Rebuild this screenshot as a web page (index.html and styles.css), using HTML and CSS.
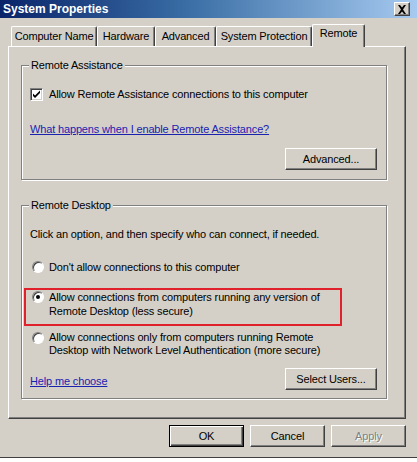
FILE: index.html
```html
<!DOCTYPE html>
<html lang="en">
<head>
  <meta charset="UTF-8">
  <title>System Properties</title>
  <link rel="stylesheet" href="styles.css">
</head>
<body>

  <div class="window">
    <!-- Title bar -->
    <div class="titlebar">
      <span class="title">System Properties</span>
      <span class="close">
        <svg width="10" height="9" viewBox="0 0 10 9"><path d="M1 0h2l2 2.5L7 0h2L6 4.5 9 9H7L5 6.5 3 9H1l3-4.5z" fill="#000"/></svg>
      </span>
    </div>

    <!-- Tabs -->
    <div class="tabs">
      <div class="tab tab-cn">Computer Name</div>
      <div class="tab tab-hw">Hardware</div>
      <div class="tab tab-adv">Advanced</div>
      <div class="tab tab-sp">System Protection</div>
      <div class="tab tab-rm active">Remote</div>
    </div>

    <div class="panel">
      <fieldset class="group group-ra">
        <legend>Remote Assistance</legend>
        <div class="check-row">
          <span class="checkbox">
            <svg width="9" height="9" viewBox="0 0 9 9"><path d="M1 3.5l2 2L8 0.5v2.5L3 8 1 6z" fill="#000"/></svg>
          </span>
          <span>Allow Remote Assistance connections to this computer</span>
        </div>
        <a class="link link-ra" href="#">What happens when I enable Remote Assistance?</a>
        <div class="btn-row">
          <button class="btn">Advanced...</button>
        </div>
      </fieldset>

      <fieldset class="group group-rd">
        <legend>Remote Desktop</legend>
        <p class="hint">Click an option, and then specify who can connect, if needed.</p>

        <div class="radio-row radio-1">
          <span class="radio"></span>
          <span>Don't allow connections to this computer</span>
        </div>

        <div class="highlight">
          <div class="radio-row">
            <span class="radio checked"></span>
            <span>Allow connections from computers running any version of<br>Remote Desktop (less secure)</span>
          </div>
        </div>

        <div class="radio-row radio-3">
          <span class="radio"></span>
          <span>Allow connections only from computers running Remote<br>Desktop with Network Level Authentication (more secure)</span>
        </div>

        <div class="bottom-row">
          <a class="link" href="#">Help me choose</a>
          <button class="btn">Select Users...</button>
        </div>
      </fieldset>
    </div>

    <!-- Dialog buttons -->
    <div class="dialog-buttons">
      <button class="btn btn-default">OK</button>
      <button class="btn">Cancel</button>
      <button class="btn" disabled>Apply</button>
    </div>
  </div>

</body>
</html>
```

FILE: styles.css
```css
* {
  box-sizing: border-box;
  margin: 0;
  padding: 0;
}
body {
  background: #fff;
  font-family: "Liberation Sans", Arial, sans-serif;
  font-size: 11px;
  letter-spacing: -0.15px;
  line-height: 14px;
  color: #000;
  width: 417px;
  height: 462px;
  overflow: hidden;
}
.window {
  width: 417px;
  height: 458px;
  background: #d4d0c8;
  border-bottom: 1px solid #404040;
  display: flex;
  flex-direction: column;
}

/* Title bar */
.titlebar {
  height: 18px;
  background: linear-gradient(90deg, #0a246a 0%, #3a6ea5 45%, #a6caf0 100%);
  display: flex;
  align-items: center;
  justify-content: space-between;
  padding: 0 7px 0 3px;
}
.title {
  color: #fff;
  font-weight: bold;
  font-size: 12px;
  letter-spacing: 0;
}
.close {
  width: 16px;
  height: 14px;
  background: #d4d0c8;
  border: 1px solid;
  border-color: #fff #404040 #404040 #fff;
  box-shadow: inset -1px -1px 0 #808080;
  display: flex;
  align-items: center;
  justify-content: center;
}

/* Tabs */
.tabs {
  display: flex;
  align-items: flex-end;
  height: 22px;
  margin: 6px 0 0 11px;
}
.tab {
  height: 20px;
  border: 1px solid #fff;
  border-bottom: none;
  border-right-color: #404040;
  border-radius: 2px 2px 0 0;
  box-shadow: inset -1px 0 0 #808080;
  text-align: center;
  line-height: 18px;
  white-space: nowrap;
}
.tab-cn { width: 86px; }
.tab-hw { width: 58px; }
.tab-adv { width: 61px; }
.tab-sp { width: 96px; }
.tab-rm { width: 53px; }
.tab.active {
  height: 23px;
  margin-bottom: -1px;
  position: relative;
  z-index: 1;
  background: #d4d0c8;
  line-height: 17px;
}

/* Tab page */
.panel {
  width: 398px;
  height: 373px;
  margin-left: 8px;
  border: 1px solid;
  border-color: #fff #404040 #404040 #fff;
  box-shadow: inset -1px -1px 0 #808080;
  padding: 11px 0 0 12px;
}
.group {
  width: 366px;
  border: 1px solid #808080;
  box-shadow: 1px 1px 0 #fff, inset 1px 1px 0 #fff;
  padding: 0 9px 0 8px;
}
.group legend {
  padding: 0 2px;
  margin-left: -1px;
  background: #d4d0c8;
  line-height: 14px;
}
.group-ra {
  height: 122px;
}
.group-rd {
  height: 201px;
  margin-top: 18px;
}

.check-row {
  display: flex;
  align-items: center;
  gap: 6px;
  margin-top: 15px;
}
.checkbox {
  width: 13px;
  height: 13px;
  background: #fff;
  border: 1px solid;
  border-color: #808080 #fff #fff #808080;
  box-shadow: inset 1px 1px 0 #404040, inset -1px -1px 0 #d4d0c8;
  display: flex;
  align-items: center;
  justify-content: center;
}
.link {
  color: #1a22b0;
  text-decoration: underline;
  display: inline-block;
}
.link-ra {
  margin-top: 21px;
}
.btn-row {
  display: flex;
  justify-content: flex-end;
  margin-top: 12px;
}
.btn {
  width: 92px;
  height: 22px;
  background: #d4d0c8;
  font: inherit;
  letter-spacing: inherit;
  color: #000;
  border: 1px solid;
  border-color: #fff #404040 #404040 #fff;
  box-shadow: inset -1px -1px 0 #808080;
}
.btn:disabled {
  color: #808080;
  text-shadow: 1px 1px 0 #fff;
}

.hint {
  margin-top: 15px;
}
.radio-row {
  display: flex;
  align-items: flex-start;
  gap: 5px;
  white-space: nowrap;
}
.radio-row .radio {
  margin-left: 2px;
  margin-top: 1px;
}
.radio-1 {
  margin-top: 19px;
}
.radio {
  flex: none;
  width: 12px;
  height: 12px;
  border-radius: 50%;
  background: #fff;
  border: 1px solid;
  border-color: #808080 #fff #fff #808080;
  box-shadow: inset 1px 1px 0 #404040;
  position: relative;
}
.radio.checked::after {
  content: "";
  position: absolute;
  left: 3px;
  top: 3px;
  width: 4px;
  height: 4px;
  border-radius: 50%;
  background: #000;
}
.highlight {
  width: 318px;
  margin: 14px 0 0 -6px;
  border: 2px solid #e0202a;
  padding: 0 0 5px 4px;
  height: 38px;
}
.radio-3 {
  margin-top: 5px;
  line-height: 13px;
}
.bottom-row {
  display: flex;
  justify-content: space-between;
  align-items: center;
  margin-top: 11px;
}
.bottom-row .link {
  margin-top: 4px;
}

/* OK / Cancel / Apply */
.dialog-buttons {
  display: flex;
  justify-content: flex-end;
  gap: 6px;
  margin: 6px 11px 0 0;
}
.dialog-buttons .btn {
  width: 75px;
}
.btn-default {
  border: 1px solid #000;
  box-shadow: inset 1px 1px 0 #fff, inset -1px -1px 0 #404040, inset -2px -2px 0 #808080;
}
```
